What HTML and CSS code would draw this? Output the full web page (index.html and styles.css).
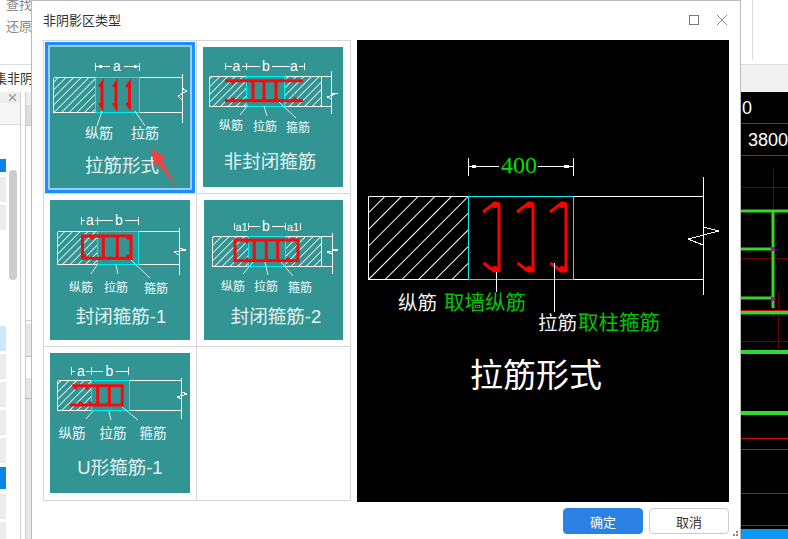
FILE: index.html
```html
<!DOCTYPE html>
<html lang="zh-CN">
<head>
    <meta charset="UTF-8">
    <meta name="viewport" content="width=device-width, initial-scale=1.0">
    <title>非阴影区类型</title>
    <link rel="stylesheet" href="styles.css">
</head>
<body>
    <div class="app">
        <div class="toolbar">
            <div class="tools">
                <span>查找</span>
                <span>还原</span>
            </div>
            <div class="toolbar-rule"></div>
        </div>
        <div class="tabs">
            <div class="tab"><span class="tab-text">集非阴影区</span></div>
        </div>
        <div class="work">
            <div class="side">
                <div class="panel">
                    <div class="panel-head">
                        <svg class="panel-close" viewBox="0 0 7 7"><path d="M0 0L7 7M7 0L0 7"/></svg>
                    </div>
                    <div class="panel-row"></div>
                    <div class="panel-body">
                        <div class="blocks">
                            <div class="block block-blue block-first"></div>
                            <div class="block"></div>
                            <div class="block"></div>
                            <div class="block-gap"></div>
                            <div class="block block-light"></div>
                            <div class="block"></div>
                            <div class="block"></div>
                            <div class="block"></div>
                            <div class="block"></div>
                            <div class="block block-blue block-second"></div>
                            <div class="block"></div>
                            <div class="block"></div>
                        </div>
                        <div class="scroll-thumb"></div>
                    </div>
                </div>
                <div class="panel2">
                    <div class="p2-head"></div>
                    <div class="p2-row"></div>
                    <div class="p2-white"></div>
                    <div class="p2-grey"></div>
                    <div class="p2-grey p2-tall"></div>
                    <div class="p2-blank"></div>
                    <div class="p2-grey p2-tall"></div>
                    <div class="p2-grey p2-fill"></div>
                </div>
            </div>
            <svg class="canvas" viewBox="741 92 47 447">
                <text class="cad-num" x="742" y="114">0</text>
                <text class="cad-num" x="748" y="146">3800</text>
                <path class="c-dkgreen" d="M741 123.500H788M741 155.500H788M741 525.500H788"/>
                <path class="c-dkred" d="M741 187.500H788M741 258.500H788M741 341.500H788M773.500 169V318M778.500 292V350M772 249.500H780"/>
                <path class="c-green" d="M741 211H788M773 212V308M741 249H772M741 298H772"/>
                <path class="c-wide" d="M741 312.500H788M741 352H788M741 413H788"/>
                <path class="c-red" d="M741 310.500H788M741 438.500H788M741 449.500H788M741 493.500H788"/>
                <rect class="c-node" x="771" y="247" width="4" height="4"/>
                <rect class="c-node" x="771" y="297" width="4" height="4"/>
                <rect class="c-status" x="741" y="529" width="47" height="10"/>
            </svg>
        </div>
    </div>

    <div class="dialog">
        <div class="dialog-title">
            <span>非阴影区类型</span>
            <div class="win-btns">
                <div class="win-max"></div>
                <svg class="win-close" viewBox="0 0 10 10"><path d="M0 0L10 10M10 0L0 10"/></svg>
            </div>
        </div>
        <div class="dialog-body">
            <div class="gallery">
                <div class="cell">
                    <svg class="thumb thumb-selected" viewBox="0 0 140 141">
                        <defs>
                            <pattern id="hatch" patternUnits="userSpaceOnUse" width="5.400" height="5.400" patternTransform="rotate(45)">
                                <rect width="0.800" height="5.400" fill="#fff"/>
                            </pattern>
                            <pattern id="hatch-big" patternUnits="userSpaceOnUse" width="11.800" height="11.800" patternTransform="rotate(45)">
                                <rect width="1" height="11.800" fill="#fff"/>
                            </pattern>
                        </defs>
                        <rect class="hatch" x="3" y="30" width="42" height="35"/>
                        <path class="ln" d="M3.500 30.500H132M3.500 65.500H132M3.500 30.500V65.500M132.500 27V76M132 41L136.700 44L128.300 49L132 53"/>
                        <rect class="cyan" x="45.500" y="30.500" width="44" height="35"/>
                        <path class="ln" d="M45.500 16V24M89.500 16V24M45 19.500H60M74 19.500H89"/>
                        <path class="dot" d="M49 19.500h3M84 19.500h3"/>
                        <text class="dim" x="67" y="24">a</text>
                        <path class="rebar" d="M49.500 40L52 36V60L49.500 56M63.500 40L66 36V60L63.500 56M76.500 40L79.500 36V60L76.500 56"/>
                        <path class="lead" d="M52 64L47 79M85 64L95 79"/>
                        <text class="lbl lbl-14" x="49" y="91">纵筋</text>
                        <text class="lbl lbl-14" x="95" y="91">拉筋</text>
                        <text class="ttl" x="72" y="125">拉筋形式</text>
                        <path class="arrow" d="M126.700 140.700L112 113L116 110.700L100.700 101.300L105 119.700L108.500 117Z"/>
                    </svg>
                </div>
                <div class="cell">
                    <svg class="thumb" viewBox="0 0 140 140">
                        <rect class="hatch" x="6" y="29" width="38" height="30"/>
                        <rect class="hatch" x="81" y="29" width="37" height="30"/>
                        <path class="ln" d="M6.500 29.500H128M6.500 59.500H128M6.500 29.500V59.500M118.500 29.500V59.500M128.500 24V67M128 47L135 46L124 50L128 52"/>
                        <rect class="cyan" x="43.500" y="29.500" width="38" height="30"/>
                        <path class="ln" d="M22.500 16V23M43.500 16V23M101.500 16V23M23 19.500H29M39 19.500H57M69 19.500H87M96 19.500H101"/>
                        <text class="dim" x="33.500" y="24">a</text>
                        <text class="dim" x="63" y="24">b</text>
                        <text class="dim" x="91" y="24">a</text>
                        <path class="rebar" d="M22 33.700H100M22 53.700H100M50 33.700V53.700M61 33.700V53.700M73 33.700V53.700"/>
                        <path class="knob" d="M30 35.500h0M50 35.500h0M61 35.500h0M73 35.500h0M30 52h0M50 52h0M61 52h0M73 52h0M92 52h0"/>
                        <path class="lead" d="M45 58L37 68M61 59L64 69M76 55L93 71"/>
                        <text class="lbl" x="28" y="83">纵筋</text>
                        <text class="lbl" x="62" y="84">拉筋</text>
                        <text class="lbl" x="95" y="85">箍筋</text>
                        <text class="ttl" x="67" y="121">非封闭箍筋</text>
                    </svg>
                </div>
                <div class="cell">
                    <svg class="thumb" viewBox="0 0 140 140">
                        <rect class="hatch" x="7" y="32" width="40" height="32"/>
                        <path class="ln" d="M7.500 31.500H129M7.500 64.500H129M7.500 31.500V64.500M129.500 28V75M129 48L136 50L124 52L129 55"/>
                        <rect class="cyan" x="47.500" y="31.500" width="41" height="33"/>
                        <path class="ln" d="M31.500 17V25M47.500 17V25M88.500 17V25M32 20.500H35M45 20.500H63M75 20.500H88"/>
                        <text class="dim" x="40" y="25">a</text>
                        <text class="dim" x="69" y="25">b</text>
                        <rect class="rebar" x="32.500" y="36" width="48.500" height="22.300"/>
                        <path class="rebar" d="M53.300 36V58M67.300 36V58"/>
                        <path class="knob" d="M42 38h0M53.300 38h0M67.300 38h0M78 38h0M35 56h0M53.300 56h0M67.300 56h0M78 56h0"/>
                        <path class="lead" d="M47 65L41 74M66 65L68 74M81 60L100 78"/>
                        <text class="lbl" x="31" y="92">纵筋</text>
                        <text class="lbl" x="66" y="92">拉筋</text>
                        <text class="lbl" x="106" y="93">箍筋</text>
                        <text class="ttl" x="71" y="123">封闭箍筋-1</text>
                    </svg>
                </div>
                <div class="cell cell-shift">
                    <svg class="thumb thumb-narrow" viewBox="0 0 139 140">
                        <rect class="hatch" x="8" y="37" width="36" height="29"/>
                        <rect class="hatch" x="82" y="37" width="36" height="29"/>
                        <path class="ln" d="M8.500 36.500H128M8.500 66.500H128M8.500 36.500V66.500M117.500 36.500V66.500M128.500 33V74M128 49L134 50L123 52L128 54"/>
                        <rect class="cyan" x="44.500" y="36.500" width="37" height="30"/>
                        <path class="ln" d="M30.500 23V30M44.500 23V30M81.500 23V30M96.500 23V30M44 26.500H56M68 26.500H82"/>
                        <text class="dim dim-sm" x="37.500" y="31">a1</text>
                        <text class="dim" x="62" y="31">b</text>
                        <text class="dim dim-sm" x="89" y="31">a1</text>
                        <rect class="rebar" x="31" y="40" width="63" height="20.700"/>
                        <path class="rebar" d="M50.300 40V60M62.300 40V60M73.700 40V60"/>
                        <path class="knob" d="M43 42h0M50.300 42h0M62.300 42h0M73.700 42h0M43 59h0M50.300 59h0M62.300 59h0M73.700 59h0M84 59h0"/>
                        <path class="lead" d="M49 62L39 74M61 62L64 75M77 62L89 76"/>
                        <text class="lbl" x="29" y="91">纵筋</text>
                        <text class="lbl" x="62" y="91">拉筋</text>
                        <text class="lbl" x="96" y="92">箍筋</text>
                        <text class="ttl" x="72" y="123">封闭箍筋-2</text>
                    </svg>
                </div>
                <div class="cell">
                    <svg class="thumb" viewBox="0 0 140 140">
                        <rect class="hatch" x="7" y="27" width="35" height="30"/>
                        <path class="ln" d="M7.500 27.500H132M7.500 57.500H132M7.500 27.500V57.500M131.500 25V66M132 39L137 41L127 44L132 46"/>
                        <rect class="cyan" x="41.500" y="27.500" width="38" height="30"/>
                        <path class="ln" d="M21.500 14V22M41.500 14V22M78.500 14V22M22 18.500H25M36 18.500H53M66 18.500H78"/>
                        <text class="dim" x="31" y="23">a</text>
                        <text class="dim" x="59.500" y="23">b</text>
                        <path class="rebar" d="M22.300 32.700H72.300V52H20M47.700 32.700V52M59.300 32.700V52"/>
                        <path class="knob" d="M26 35h0M37 35h0M47.700 35h0M59.300 35h0M30 50h0M40 50h0M47.700 50h0M59.300 50h0"/>
                        <path class="lead" d="M43 58L36 66M59 58L61 67M72 54L88 67"/>
                        <text class="lbl lbl-13" x="22" y="85">纵筋</text>
                        <text class="lbl lbl-13" x="63" y="85">拉筋</text>
                        <text class="lbl lbl-13" x="103" y="85">箍筋</text>
                        <text class="ttl" x="70" y="121">U形箍筋-1</text>
                    </svg>
                </div>
                <div class="cell"></div>
            </div>
            <svg class="preview" viewBox="0 0 372 462">
                <rect class="hatch-big" x="11" y="156" width="100" height="83"/>
                <path class="ln" d="M11.500 156.500H346M11.500 239.500H346M11.500 156.500V239.500M346.500 137V255M346 187L362 191L331 199L346 205"/>
                <rect class="cyan" x="111.500" y="156.500" width="105" height="83"/>
                <path class="ln" d="M111.500 118V136M216.500 118V136M112 126.500H142M181 126.500H216"/>
                <path class="dot" d="M115 126.500h4M207 126.500h5"/>
                <text class="big-num" x="162" y="133">400</text>
                <path class="rebar-big" d="M126 172L138 163L142 164V231H137L126.500 223M160 172L172 163L176 164V231H171L160.500 223M193 172L205 163L209 164V231H204L193.500 223"/>
                <path class="knob-big" d="M138 165h0M172 165h0M205 165h0M138 229h0M172 229h0M205 229h0"/>
                <path class="ln" d="M139.500 232V252M197.500 223V272"/>
                <text class="p-white" x="41" y="270">纵筋</text>
                <text class="p-green" x="87" y="270">取墙纵筋</text>
                <text class="p-white" x="181" y="290">拉筋</text>
                <text class="p-green" x="221" y="290">取柱箍筋</text>
                <text class="p-title" x="113" y="347">拉筋形式</text>
            </svg>
        </div>
        <div class="dialog-foot">
            <button class="btn btn-ok">确定</button>
            <button class="btn">取消</button>
        </div>
        <div class="grip"></div>
    </div>
</body>
</html>
```

FILE: styles.css
```css
body {
    margin: 0;
    overflow: hidden;
    background-color: #fff;
    font-family: "Liberation Sans", "Noto Sans CJK SC", sans-serif;
}
.app {
    display: flex;
    flex-direction: column;
    height: 539px;
    overflow: hidden;
}
.toolbar {
    display: flex;
    flex-shrink: 0;
    height: 65px;
    box-sizing: border-box;
    border-bottom: 1px solid #ddd;
    overflow: hidden;
}
.tools {
    display: flex;
    flex-direction: column;
    gap: 4px;
    margin-top: -4px;
    padding-left: 6px;
    font-size: 13px;
    line-height: 18px;
    color: #888;
}
.toolbar-rule {
    width: 1px;
    height: 60px;
    margin-left: auto;
    margin-right: 35px;
    background-color: #ddd;
}
.tabs {
    display: flex;
    flex-shrink: 0;
    height: 27px;
    background-color: #f0f0f0;
}
.tab {
    width: 31px;
    overflow: hidden;
    white-space: nowrap;
    background-color: #fff;
    font-size: 13px;
    line-height: 27px;
    color: #333;
}
.tab-text {
    margin-left: -6px;
}
.work {
    display: flex;
    justify-content: space-between;
    flex: 1;
    min-height: 0;
}
.side {
    display: flex;
    width: 31px;
    gap: 4px;
}
.panel {
    width: 20px;
    box-sizing: content-box;
    border-right: 1px solid #ccc;
}
.panel-head {
    display: flex;
    align-items: center;
    justify-content: flex-end;
    height: 11px;
    padding-right: 4px;
    background-color: #eee;
}
.panel-close {
    width: 7px;
    height: 7px;
}
.panel-close path {
    stroke: #999;
    stroke-width: 1.300;
    fill: none;
}
.panel-row {
    height: 21px;
    background-color: #f6f6f6;
    border-bottom: 1px solid #ddd;
}
.panel-body {
    display: flex;
    gap: 3px;
    padding-top: 34px;
}
.blocks {
    display: flex;
    flex-direction: column;
    gap: 3px;
    width: 6px;
}
.block {
    height: 25px;
    flex-shrink: 0;
    background-color: #ebebeb;
}
.block-blue {
    background-color: #0a84e8;
}
.block-first {
    height: 13px;
    margin-bottom: 2px;
}
.block-second {
    height: 22px;
    margin-top: 1px;
    margin-bottom: 2px;
}
.block-light {
    background-color: #d0e6fb;
}
.block-gap {
    height: 90px;
    flex-shrink: 0;
}
.scroll-thumb {
    width: 8px;
    height: 110px;
    margin-top: 11px;
    border-radius: 4px;
    background-color: #ccc;
}
.panel2 {
    display: flex;
    flex-direction: column;
    flex: 1;
    border-left: 1px solid #ccc;
}
.p2-head {
    height: 13px;
    background-color: #eee;
}
.p2-row {
    height: 20px;
    background-color: #ddd;
    border-bottom: 1px solid #ccc;
}
.p2-white {
    height: 194px;
    border-bottom: 1px solid #ccc;
}
.p2-grey {
    height: 12px;
    margin-top: 3px;
    background-color: #e6e6e6;
}
.p2-tall {
    height: 20px;
    margin-top: 0;
    border-bottom: 1px solid #bbb;
}
.p2-blank {
    height: 21px;
}
.p2-fill {
    flex: 1;
    margin-top: 0;
}
.canvas {
    flex-shrink: 0;
    width: 47px;
    height: 447px;
    background-color: #000;
}
.cad-num {
    fill: #fff;
    font-family: "Liberation Sans", sans-serif;
    font-size: 18px;
}
.c-dkgreen {
    stroke: #0b6a0b;
    fill: none;
}
.c-dkred {
    stroke: #6b0000;
    fill: none;
}
.c-green {
    stroke: #3bd32a;
    stroke-width: 3;
    fill: none;
}
.c-wide {
    stroke: #2edc2e;
    stroke-width: 4;
    fill: none;
}
.c-red {
    stroke: #c80a0a;
    fill: none;
}
.c-node {
    fill: #a010a0;
}
.c-status {
    fill: #0a98f5;
}

/* dialog */
.dialog {
    position: absolute;
    left: 31px;
    top: 0;
    width: 708px;
    height: 545px;
    border: 1px solid #bbb;
    background-color: #fff;
}
.dialog-title {
    display: flex;
    align-items: center;
    justify-content: space-between;
    box-sizing: border-box;
    height: 39px;
    padding: 0 13px 2px 11px;
    font-size: 13px;
    color: #333;
}
.win-btns {
    display: flex;
    align-items: center;
    gap: 18px;
}
.win-max {
    width: 8px;
    height: 8px;
    border: 1px solid #777;
}
.win-close {
    width: 10px;
    height: 10px;
}
.win-close path {
    stroke: #888;
    fill: none;
}
.dialog-body {
    display: flex;
    align-items: flex-start;
    gap: 6px;
    padding-left: 11px;
}
.gallery {
    display: grid;
    grid-template-columns: 152px 153px;
    grid-template-rows: 152px 152px 153px;
    gap: 1px;
    border: 1px solid #d6d6d6;
    background-color: #d6d6d6;
}
.cell {
    padding: 6px;
    background-color: #fff;
}
.cell-shift {
    padding-left: 7px;
}
.thumb {
    display: block;
    width: 140px;
    height: 140px;
    background-color: #339494;
}
.thumb-selected {
    height: 141px;
    box-shadow: 0 0 0 2px #99ccff, 0 0 0 5px #1890ff;
}
.thumb-narrow {
    width: 139px;
}
.hatch {
    fill: url(#hatch);
}
.hatch-big {
    fill: url(#hatch-big);
}
.ln {
    stroke: #fff;
    fill: none;
    shape-rendering: crispEdges;
}
.cyan {
    stroke: #00f0f0;
    fill: none;
    shape-rendering: crispEdges;
}
.dot {
    stroke: #fff;
    stroke-width: 3;
    fill: none;
}
.lead {
    stroke: #fff;
    stroke-width: 0.800;
    fill: none;
}
.rebar {
    stroke: #f80a0a;
    stroke-width: 3;
    fill: none;
}
.knob {
    stroke: #f80a0a;
    stroke-width: 3.500;
    stroke-linecap: round;
    fill: none;
}
.rebar-big {
    stroke: #f00;
    stroke-width: 3;
    fill: none;
}
.knob-big {
    stroke: #f00;
    stroke-width: 6;
    stroke-linecap: round;
    fill: none;
}
.arrow {
    fill: #f44141;
}
.dim {
    fill: #fff;
    font-family: "Liberation Sans", sans-serif;
    font-size: 14px;
    text-anchor: middle;
}
.dim-sm {
    font-size: 11px;
}
.lbl {
    fill: #f4fbfa;
    font-size: 12px;
    text-anchor: middle;
}
.lbl-13 {
    font-size: 13.500px;
}
.lbl-14 {
    font-size: 14px;
}
.ttl {
    fill: #e4f3f1;
    font-size: 18.500px;
    text-anchor: middle;
}
.preview {
    width: 372px;
    height: 462px;
    background-color: #000;
}
.big-num {
    fill: #00e000;
    font-family: "Liberation Serif", serif;
    font-size: 24px;
    text-anchor: middle;
}
.p-white {
    fill: #f2f2f2;
    font-size: 19.500px;
}
.p-green {
    fill: #00c800;
    font-size: 20.500px;
}
.p-title {
    fill: #fff;
    font-size: 33px;
}
.dialog-foot {
    display: flex;
    justify-content: flex-end;
    gap: 6px;
    padding: 6px 11px 0 0;
}
.btn {
    width: 80px;
    height: 26px;
    padding: 0;
    border: 1px solid #ccc;
    border-radius: 4px;
    background-color: #fff;
    font-family: "Liberation Sans", "Noto Sans CJK SC", sans-serif;
    font-size: 13px;
    color: #333;
}
.btn-ok {
    border-color: #2b80e4;
    background-color: #2b80e4;
    color: #fff;
}
.grip {
    position: absolute;
    left: 704px;
    top: 533px;
    width: 2px;
    height: 2px;
    background-color: #888;
    box-shadow: -3px 0 0 #888, 0 -3px 0 #888;
}
```
